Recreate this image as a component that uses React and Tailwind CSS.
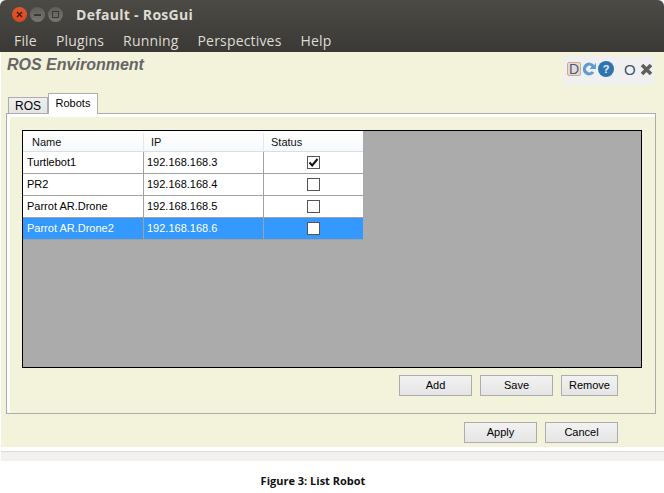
import React from "react";

const robots = [
  { name: "Turtlebot1", ip: "192.168.168.3", on: true },
  { name: "PR2", ip: "192.168.168.4" },
  { name: "Parrot AR.Drone", ip: "192.168.168.5" },
  { name: "Parrot AR.Drone2", ip: "192.168.168.6", selected: true },
];

const WinButton = ({ red, children }) => (
  <span
    className={
      "flex h-[15px] w-[15px] items-center justify-center rounded-full " +
      (red ? "bg-gradient-to-b from-[#e0562c] to-[#d9481f]" : "bg-gradient-to-b from-[#5e5d58] to-[#787670]")
    }
  >
    {children}
  </span>
);

const Btn = ({ w, children }) => (
  <button className={"h-[21px] border border-[#adadad] bg-gradient-to-b from-[#f2f2f2] to-[#e5e5e5] text-[11px] text-black " + w}>
    {children}
  </button>
);

const Row = ({ name, ip, on, selected }) => (
  <div className={"flex h-[22px] border-b border-[#a0a0a0] " + (selected ? "bg-[#3399ff] text-white" : "bg-white text-black")}>
    <div className="flex w-[121px] items-center border-r border-[#a0a0a0] pl-[4px]">{name}</div>
    <div className="flex w-[120px] items-center border-r border-[#a0a0a0] pl-[3px]">{ip}</div>
    <div className="flex w-[99px] items-center justify-center">
      <span className="flex h-[13px] w-[13px] items-center justify-center border border-[#555] bg-white">
        {on && (
          <svg width="11" height="11" viewBox="0 0 11 11">
            <path d="M1.5 5.5 L4.2 8.5 L9.5 2" fill="none" stroke="#111" strokeWidth="2" />
          </svg>
        )}
      </span>
    </div>
  </div>
);

export default function App() {
  return (
    <div className="flex h-[493px] w-[664px] flex-col overflow-hidden bg-white font-['Liberation_Sans',sans-serif]">
      {/* Ubuntu title + menu */}
      <div className="h-[52px] rounded-t-[6px] bg-gradient-to-b from-[#4b4a45] to-[#3a3935] font-['Open_Sans',sans-serif] text-[#dfdbd2]">
        <div className="flex h-[27px] items-center pl-[12px] pt-[2px]">
          <div className="flex gap-[3px]">
            <WinButton red>
              <svg width="7" height="7" viewBox="0 0 7 7">
                <path d="M1 1 L6 6 M6 1 L1 6" stroke="#4a1a08" strokeWidth="1.4" />
              </svg>
            </WinButton>
            <WinButton>
              <span className="h-[2px] w-[7px] bg-[#3a3935]" />
            </WinButton>
            <WinButton>
              <span className="h-[7px] w-[7px] border border-[#3a3935]" />
            </WinButton>
          </div>
          <span className="ml-[13px] text-[14px] font-bold tracking-[0.3px]">Default - RosGui</span>
        </div>
        <div className="flex h-[25px] items-center gap-[19px] pl-[14px] pt-[2px] text-[14px] tracking-[0.18px]">
          <span>File</span>
          <span>Plugins</span>
          <span>Running</span>
          <span>Perspectives</span>
          <span>Help</span>
        </div>
      </div>

      {/* main window body */}
      <div className="ml-[1px] flex h-[395px] flex-col bg-[#f3f3dc]">
        <div className="flex h-[41px] items-start justify-between pl-[6px] pr-[10px]">
          <span className="mt-[4px] text-[16px] font-bold italic leading-[18px] text-[#666666]">ROS Environment</span>
          <div className="mt-[4px] flex h-[29px] w-[90px] items-start bg-[#f0f0f0] pl-[3px] pt-[5px]">
            <span className="mt-[1px] flex h-[14px] w-[14px] items-center justify-center rounded-[2px] border border-[#c9a998] bg-[#ecd9cc] text-[14px] leading-none text-[#3a5f8a]">
              D
            </span>
            <svg width="16" height="16" viewBox="0 0 15 15">
              <path d="M12.5 4 A6 6 0 1 0 12.5 11 L10 9.5 A3 3 0 1 1 10 5.5 L8 7.5 L14 7.5 L14 1.5 Z" fill="#5b9bd8" />
            </svg>
            <svg width="16" height="16" viewBox="0 0 16 16" className="ml-[1px]">
              <circle cx="8" cy="8" r="8" fill="#2f74b0" />
              <text x="8" y="12" textAnchor="middle" fontSize="11" fontWeight="bold" fill="#e8f1fa" fontFamily="Liberation Sans">?</text>
            </svg>
            <span className="ml-[10px] text-[15px] leading-[17px] text-[#3d5570]">O</span>
            <svg width="13" height="13" viewBox="0 0 13 13" className="ml-[4px] mt-[2px]">
              <path d="M2 2 L11 11 M11 2 L2 11" stroke="#5e5e5e" strokeWidth="3.6" />
            </svg>
          </div>
        </div>

        {/* tabs */}
        <div className="flex h-[20px] items-end pl-[7px] text-[11px] text-black">
          <div className="flex h-[16px] w-[40px] items-center justify-center border border-b-0 border-[#adadad] bg-gradient-to-b from-[#f0f0f0] to-[#e4e4e4] text-[12px]">
            ROS
          </div>
          <div className="relative -mb-[1px] flex h-[21px] w-[50px] items-center justify-center border border-b-0 border-[#adadad] bg-white pb-[2px]">
            Robots
          </div>
        </div>

        <div className="ml-[5px] mr-[8px] flex h-[301px] flex-col border border-[#adadad] bg-[#f3f3dc]">
          <div className="flex h-full flex-col border-l-[3px] border-t-[3px] border-white pl-[12px] pr-[13px] pt-[13px]">
            <div className="h-[238px] border border-black bg-[#ababab] text-[11px]">
              <div className="w-[340px]">
                <div className="flex h-[21px] border-b border-[#d5dfe5] bg-gradient-to-b from-white to-[#f6f9fc] pt-[2px] text-[#111]">
                  <div className="flex w-[121px] items-center border-r border-[#e3e8ee] pl-[9px]">Name</div>
                  <div className="flex w-[120px] items-center border-r border-[#e3e8ee] pl-[7px]">IP</div>
                  <div className="flex w-[99px] items-center pl-[7px]">Status</div>
                </div>
                {robots.map((r) => (
                  <Row key={r.name} {...r} />
                ))}
              </div>
            </div>
            <div className="mt-[7px] flex justify-end gap-[8px] pr-[24px]">
              <Btn w="w-[73px]">Add</Btn>
              <Btn w="w-[73px]">Save</Btn>
              <Btn w="w-[57px]">Remove</Btn>
            </div>
          </div>
        </div>

        <div className="mt-[8px] flex justify-end gap-[8px] pr-[46px]">
          <Btn w="w-[73px]">Apply</Btn>
          <Btn w="w-[73px]">Cancel</Btn>
        </div>
      </div>

      <div className="ml-[1px] mt-[4px] h-[10px] border-t border-[#dcdcdc] bg-[#f2f1f0]" />

      <p className="mt-[13px] pr-[38px] text-center font-['Open_Sans',sans-serif] text-[11px] font-bold leading-[14px] text-[#111]">
        Figure 3: List Robot
      </p>
    </div>
  );
}
